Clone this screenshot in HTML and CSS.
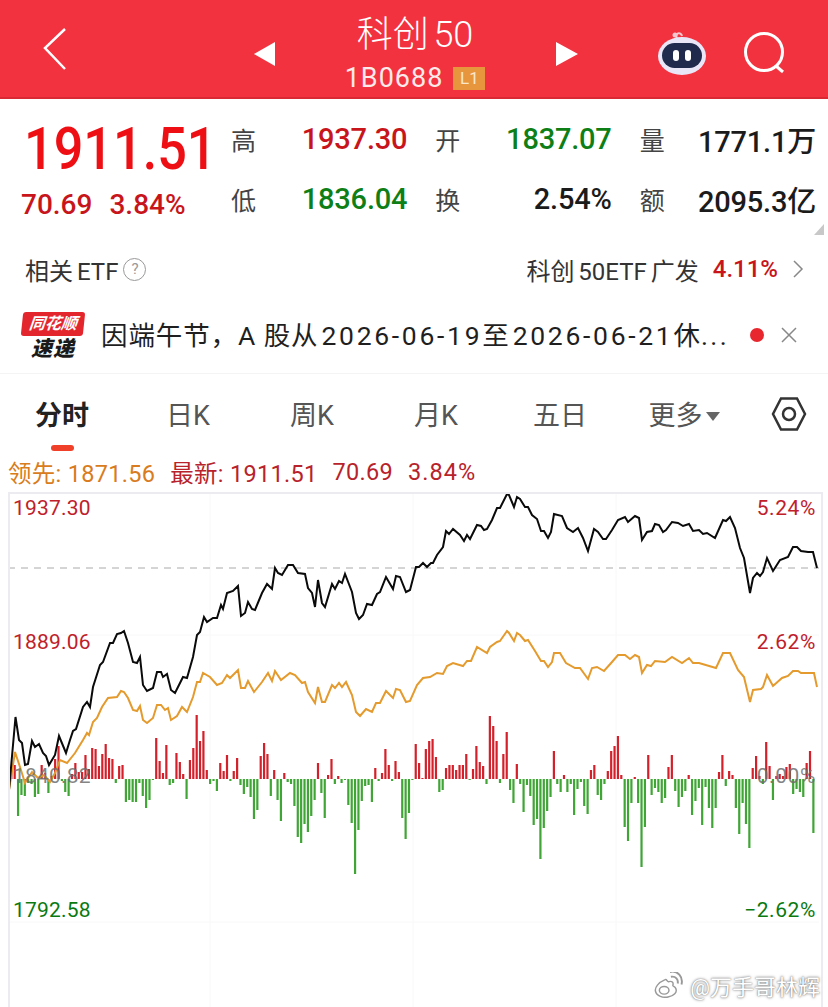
FILE: index.html
```html
<!DOCTYPE html>
<html lang="zh-CN">

<head>
  <meta charset="UTF-8">
  <meta name="viewport" content="width=device-width, initial-scale=1.0">
  <title>科创 50</title>
  <link rel="stylesheet" href="styles.css">
</head>

<body>
  <header class="topbar">
    <svg class="back" width="32" height="52" viewBox="0 0 32 52">
      <polyline points="26,6 6,25 26,46" />
    </svg>
    <div class="title-wrap">
      <svg class="tri" width="24" height="26" viewBox="0 0 24 26">
        <polygon points="22,1 22,25 1,13" />
      </svg>
      <div class="title">
        <div class="name">科创 50</div>
        <div class="code">1B0688<span class="level">L1</span></div>
      </div>
      <svg class="tri" width="24" height="26" viewBox="0 0 24 26">
        <polygon points="1,1 1,25 23,13" />
      </svg>
    </div>
    <div class="top-icons">
      <svg width="52" height="46" viewBox="0 0 52 46">
        <path class="robot-ant" d="M20 8 C17 2 24 0 25 5" />
        <circle cx="18" cy="4" r="2.5" fill="#f3c9cf" />
        <ellipse cx="25" cy="25" rx="24" ry="19" fill="#e9e6f7" />
        <rect x="5" y="12" width="40" height="25" rx="12.5" fill="#1f2a4d" />
        <rect x="16" y="19" width="6" height="11" rx="3" fill="#fff" />
        <rect x="28" y="19" width="6" height="11" rx="3" fill="#fff" />
      </svg>
      <svg class="search" width="46" height="46" viewBox="0 0 46 46">
        <circle cx="21" cy="21" r="18.5" />
        <line x1="33" y1="35" x2="40" y2="41" />
      </svg>
    </div>
  </header>

  <section class="quote">
    <div class="price-box">
      <div class="price">1911.51</div>
      <div class="change"><span>70.69</span><span>3.84%</span></div>
    </div>
    <div class="stats">
      <span class="lb">高</span><span class="val up">1937.30</span>
      <span class="lb">开</span><span class="val down">1837.07</span>
      <span class="lb">量</span><span class="val">1771.1万</span>
      <span class="lb">低</span><span class="val down">1836.04</span>
      <span class="lb">换</span><span class="val">2.54%</span>
      <span class="lb">额</span><span class="val">2095.3亿</span>
    </div>
    <i class="corner"></i>
  </section>

  <section class="etf">
    <div class="etf-left">相关 ETF<span class="help">?</span></div>
    <div class="etf-right">
      <span>科创 50ETF 广发</span>
      <span class="etf-pct">4.11%</span>
      <svg width="12" height="20" viewBox="0 0 12 20">
        <polyline points="2,2 10,10 2,18" />
      </svg>
    </div>
  </section>

  <section class="news">
    <div class="logo">
      <div class="logo-top">同花顺</div>
      <div class="logo-bottom">速递</div>
    </div>
    <div class="news-text">因端午节，A 股从<span class="date">2026-06-19</span>至<span class="date">2026-06-21</span>休<span class="more">...</span></div>
    <i class="dot"></i>
    <svg class="close" width="16" height="16" viewBox="0 0 16 16">
      <path d="M1 1 L15 15 M15 1 L1 15" />
    </svg>
  </section>

  <nav class="tabs">
    <div class="tab active">分时</div>
    <div class="tab">日K</div>
    <div class="tab">周K</div>
    <div class="tab">月K</div>
    <div class="tab">五日</div>
    <div class="tab">更多<span class="caret"></span></div>
    <svg class="hex" width="36" height="36" viewBox="0 0 36 36">
      <polygon points="10,2.5 26,2.5 34,18 26,33.5 10,33.5 2,18" />
      <circle cx="18" cy="18" r="6" />
    </svg>
  </nav>

  <div class="legend">
    <span class="lead">领先: 1871.56</span>
    <span class="latest">最新: 1911.51</span>
    <span class="latest">70.69</span>
    <span class="latest">3.84%</span>
  </div>

  <section class="chart">
    <svg class="plot" width="828" height="515" viewBox="0 492 828 515">
      <g class="grid">
        <line x1="8" y1="635" x2="819" y2="635" />
        <line x1="8" y1="922" x2="819" y2="922" />
        <line x1="210" y1="492" x2="210" y2="1007" />
        <line x1="413" y1="492" x2="413" y2="1007" />
        <line x1="616" y1="492" x2="616" y2="1007" />
      </g>
      <line class="prev" x1="8" y1="568" x2="819" y2="568" />
      <path id="barsUp" class="bars-up" />
      <path id="barsDown" class="bars-down" />
      <polyline class="avg" points="9,790 15,752 20,767 25,783 32,772 38,778 44,775 50,782 55,773 60,760 67,763 75,753 83,740 87,733 89,735 93,722 97,718 102,707 108,698 117,697 121,691 124,692 128,698 133,710 137,711 140,706 143,720 147,723 153,718 157,705 161,705 165,710 168,708 171,720 177,716 182,707 187,712 193,697 197,682 200,682 203,673 210,677 217,685 222,683 227,675 230,678 238,670 241,688 245,688 248,681 254,692 262,682 268,673 272,681 275,671 281,680 290,673 295,675 302,683 305,682 308,692 315,703 318,687 322,702 325,702 332,685 335,688 339,683 342,687 346,682 352,695 356,712 360,716 366,709 372,712 376,703 380,703 386,691 393,698 396,689 400,690 406,702 410,701 417,685 423,678 430,677 437,673 443,674 447,666 453,663 463,666 467,661 471,661 477,647 487,653 490,647 497,642 500,641 507,631 509,633 514,641 517,633 520,635 525,641 528,640 535,651 541,661 544,661 548,667 552,662 554,653 560,653 566,663 575,668 580,668 588,679 592,668 597,667 604,671 612,662 618,655 625,655 630,659 635,655 639,657 642,673 647,665 651,666 655,661 665,662 672,657 682,663 689,658 693,663 699,663 716,668 723,653 730,653 738,670 744,677 750,702 753,690 761,689 763,687 767,675 773,686 782,678 788,676 793,671 798,671 801,673 814,673 817,687" />
      <polyline class="price-line" points="9,790 15.5,717 19,740 22,743 25,765 28,764 32,741 35,747 39,744 43,753 46,756 49,765 55,755 59,736 66,753 70,740 73,731 76,729 83,707 87,702 90,707 93,687 100,665 103,662 110,643 113,643 117,634 121,633 124,631 128,643 133,662 137,663 140,657 143,685 147,691 153,688 157,672 161,672 163,677 167,674 171,690 175,693 178,687 183,677 187,678 193,657 197,635 200,632 204,617 207,622 213,618 217,618 221,605 223,609 227,593 233,591 238,586 241,616 245,613 248,602 252,609 255,610 262,593 267,584 272,589 275,568 278,573 282,575 288,565 293,565 298,573 305,574 308,588 312,593 315,607 318,580 322,603 325,607 332,584 335,589 339,581 342,583 345,574 352,592 356,613 359,619 363,615 367,604 372,605 377,594 380,592 386,577 393,589 396,576 400,577 406,592 410,590 416,567 419,567 423,563 427,567 431,563 433,563 437,555 443,547 446,531 449,534 453,529 460,535 464,541 467,535 470,539 477,525 481,526 484,530 487,529 492,520 497,508 500,508 507,494 509,495 514,507 517,497 520,499 525,507 528,507 532,515 537,519 541,531 544,531 548,538 551,532 554,514 562,516 567,528 573,532 578,528 583,538 588,551 594,529 598,532 603,539 606,539 612,530 618,520 625,517 628,522 635,516 639,518 642,540 647,532 652,531 655,524 659,525 663,532 666,530 672,522 678,523 683,526 689,524 693,531 699,530 703,534 707,533 715,538 723,520 726,521 730,517 735,528 740,548 744,558 750,593 753,578 757,573 760,576 763,572 767,558 773,571 780,560 788,557 793,547 797,547 801,551 808,552 813,552 817,568" />
    </svg>
    <span class="axis l up-t a1">1937.30</span>
    <span class="axis r up-t a1">5.24%</span>
    <span class="axis l up-t a2">1889.06</span>
    <span class="axis r up-t a2">2.62%</span>
    <span class="axis l flat-t a3">1840.82</span>
    <span class="axis r flat-t a3">0.00%</span>
    <span class="axis l down-t a4">1792.58</span>
    <span class="axis r down-t a4">−2.62%</span>
    <div class="mark">
      <svg width="31" height="26" viewBox="0 2 31 27">
        <path class="mark-blob" d="M12 10 C5 13 1 18 2 22 C3 27 10 29 15 28 C21 27 25 23 23 19 C22 17 20 17 20 16 C21 13 19 11 16 12 C14 13 14 9 12 10 Z" />
        <ellipse class="mark-eye" cx="11" cy="21" rx="5" ry="4" />
        <path class="mark-arc" d="M18 7 C23 6 26 10 25 14 M17 2 C25 0 31 7 29 15" />
      </svg>
      <span>@万手哥林辉</span>
    </div>
  </section>

  <script src="chart.js"></script>
</body>

</html>
```

FILE: styles.css
```css
* {
  box-sizing: border-box;
}

html,
body {
  margin: 0;
  height: 1007px;
  overflow: hidden;
  background: #fff;
}

body {
  font-family: Roboto, "Noto Sans CJK SC", sans-serif;
  color: #222;
}

.topbar {
  height: 99px;
  display: flex;
  align-items: center;
  padding-left: 39px;
  background: #f3323f;
  border-bottom: 2px solid #d92935;
  color: #fff;
}

.back polyline {
  fill: none;
  stroke: #fff;
  stroke-width: 2.5;
}

.title-wrap {
  display: flex;
  align-items: center;
  align-self: stretch;
  margin-left: 182px;
  width: 326px;
  justify-content: space-between;
}

.tri {
  fill: #fff;
  margin-top: 11px;
}

.title {
  text-align: center;
  padding-top: 12px;
  margin-left: -2px;
  align-self: flex-start;
}

.name {
  font-size: 36px;
  font-weight: 300;
  line-height: 46px;
  word-spacing: -4px;
}

.code {
  margin-top: 4px;
  font-size: 27px;
  line-height: 32px;
  color: #fdeaea;
  letter-spacing: 1px;
  display: flex;
  align-items: center;
  justify-content: center;
  font-weight: 400;
}

.level {
  width: 32px;
  height: 23px;
  margin-left: 10px;
  background: #e8963e;
  color: #fbe6cc;
  font-size: 17px;
  letter-spacing: 0;
  line-height: 23px;
  text-align: center;
}

.top-icons {
  display: flex;
  align-items: center;
  gap: 35px;
  margin-left: 78px;
  margin-top: 10px;
}

.robot-ant {
  fill: none;
  stroke: #f3c9cf;
  stroke-width: 2;
}

.search circle,
.search line {
  fill: none;
  stroke: #fff;
  stroke-width: 3;
}

.search {
  margin-left: -1px;
}

.quote {
  position: relative;
  height: 141px;
  display: flex;
  padding: 10px 12px 0 0;
}

.price-box {
  width: 231px;
  flex: none;
}

.price {
  margin: 6px 0 0 24px;
  font-size: 60px;
  line-height: 68px;
  font-weight: 500;
  color: #ee0f14;
  transform: scaleX(0.87);
  transform-origin: left center;
}

.change {
  display: flex;
  gap: 17px;
  margin: 6px 0 0 21px;
  font-size: 28px;
  line-height: 32px;
  font-weight: 500;
  color: #c8151b;
}

.stats {
  flex: 1;
  display: grid;
  grid-template-columns: 26px 1fr 26px 1fr 26px 1fr;
  grid-template-rows: 60px 60px;
  column-gap: 28px;
  align-items: center;
}

.lb {
  font-size: 25px;
  color: #444;
}

.val {
  text-align: right;
  font-size: 29px;
  font-weight: 500;
  letter-spacing: -0.2px;
  color: #1b1b1b;
  white-space: nowrap;
}

.up {
  color: #c8151b;
}

.down {
  color: #0d7f16;
}

.corner {
  position: absolute;
  right: 4px;
  bottom: 5px;
  width: 0;
  height: 0;
  border-left: 10px solid transparent;
  border-bottom: 11px solid #c8c8c8;
}

.etf {
  height: 62px;
  display: flex;
  justify-content: space-between;
  align-items: center;
  padding: 0 24px 4px 25px;
  font-size: 24px;
  word-spacing: -2px;
}

.etf-left {
  display: flex;
  align-items: center;
  color: #333;
}

.help {
  width: 23px;
  height: 23px;
  margin-left: 5px;
  border: 1px solid #999;
  border-radius: 50%;
  color: #999;
  font-size: 15px;
  line-height: 21px;
  text-align: center;
}

.etf-right {
  display: flex;
  align-items: center;
  color: #333;
}

.etf-pct {
  margin: 0 14px;
  color: #c8151b;
  font-weight: 500;
}

.etf-right polyline {
  fill: none;
  stroke: #888;
  stroke-width: 1.5;
}

.news {
  height: 72px;
  display: flex;
  align-items: center;
  padding-left: 22px;
  border-bottom: 1px solid #f4f4f4;
}

.logo {
  width: 62px;
  flex: none;
  text-align: center;
}

.logo-top {
  height: 24px;
  background: #e3262e;
  border-radius: 3px;
  color: #fff;
  font-size: 16px;
  font-weight: 700;
  font-style: italic;
  line-height: 23px;
  transform: skewX(-6deg);
}

.logo-bottom {
  font-size: 21px;
  font-weight: 900;
  font-style: italic;
  line-height: 27px;
  letter-spacing: 1px;
  color: #1a1a1a;
}

.news-text {
  margin: -9px 0 0 17px;
  width: 649px;
  flex: none;
  font-size: 26.5px;
  letter-spacing: 0.9px;
  color: #1f1f1f;
  white-space: nowrap;
}

.date {
  margin: 0 0 0 3px;
  letter-spacing: 2.7px;
}

.more {
  letter-spacing: 2.5px;
}

.dot {
  width: 14px;
  height: 14px;
  margin-top: -5px;
  border-radius: 50%;
  background: #e8262d;
  flex: none;
}

.close {
  margin: -5px 0 0 17px;
}

.close path {
  stroke: #888;
  stroke-width: 1.5;
}

.tabs {
  position: relative;
  height: 82px;
  display: grid;
  grid-template-columns: 126px 124px 124px 124px 124px 124px 1fr;
  align-items: center;
}

.tab {
  text-align: center;
  font-size: 27px;
  color: #555;
  margin-top: -4px;
}

.tabs .tab:first-child {
  text-align: left;
  padding-left: 35px;
}

.tab.active {
  font-weight: 700;
  color: #222;
}

.tab.active::after {
  content: "";
  position: absolute;
  left: 51px;
  bottom: 5px;
  width: 23px;
  height: 6px;
  border-radius: 3px;
  background: #f0402a;
}

.caret {
  display: inline-block;
  width: 0;
  height: 0;
  margin-left: 3px;
  vertical-align: 4px;
  border-left: 7px solid transparent;
  border-right: 7px solid transparent;
  border-top: 9px solid #666;
}

.hex {
  justify-self: start;
  margin-left: 25px;
  margin-top: -2px;
}

.hex polygon,
.hex circle {
  fill: none;
  stroke: #333;
  stroke-width: 2.5;
}

.legend {
  height: 36px;
  display: flex;
  gap: 15px;
  padding: 0 0 4px 8px;
  align-items: center;
  font-size: 23.5px;
  letter-spacing: 0.3px;
}

.legend span:last-child {
  letter-spacing: 1px;
}

.lead {
  color: #d97c20;
}

.latest {
  color: #b8232b;
}

.chart {
  position: relative;
  height: 515px;
}

.plot {
  display: block;
}

.grid line {
  stroke: #f8f8f9;
  stroke-width: 1;
}

.prev {
  stroke: #aaa;
  stroke-width: 1;
  stroke-dasharray: 7 6;
}

.bars-up {
  stroke: #d3202a;
  stroke-width: 2.2;
  fill: none;
}

.bars-down {
  stroke: #3fa535;
  stroke-width: 2.2;
  fill: none;
}

.avg {
  fill: none;
  stroke: #e49a2c;
  stroke-width: 2;
}

.price-line {
  fill: none;
  stroke: #0a0a0a;
  stroke-width: 2;
}

/* frame of the chart, drawn over the plot */
.chart::before {
  content: "";
  position: absolute;
  left: 8px;
  top: 0;
  width: 811px;
  height: 515px;
  border: 2px solid #ececf0;
  border-bottom: 0;
  pointer-events: none;
}

.axis {
  position: absolute;
  font-size: 21px;
  line-height: 24px;
  letter-spacing: 0.2px;
}

.axis.l {
  left: 13px;
}

.axis.r {
  right: 12px;
  letter-spacing: 0.6px;
}

.a1 {
  top: 4px;
}

.a2 {
  top: 138px;
}

.a3 {
  top: 272px;
}

.a4 {
  top: 406px;
}

.up-t {
  color: #c0202a;
}

.flat-t {
  color: rgba(110, 110, 110, 0.85);
}

.down-t {
  color: #0a7a10;
}

.mark {
  position: absolute;
  right: 8px;
  bottom: 6px;
  display: flex;
  align-items: center;
  gap: 6px;
  font-size: 22px;
  color: #fff;
  text-shadow: 0 0 3px #777, 0 0 1px #777;
}

.mark-blob,
.mark-eye {
  fill: #fff;
  stroke: #999;
  stroke-width: 1.5;
}

.mark-arc {
  fill: none;
  stroke: #999;
  stroke-width: 2;
}
```

FILE: chart.js
```js
// 每分鐘一根量柱，正的往上畫紅色，負的往下畫綠色
const bars = [
  9, 14, -37, -16, -17, -4, -5, -18, -15, 14,
  6, -14, 3, 20, 33, -2, -13, -17, 5, 16,
  7, 7, 24, 10, 31, 30, 13, 25, 35, 21,
  20, -4, 13, 14, -23, -21, -23, -23, -4, -17,
  -29, -21, -1, 41, 18, 6, 34, -6, -4, 26,
  17, 5, -20, 19, 31, 64, 38, 48, 9, -5,
  -2, -12, 16, 8, 24, -2, 8, 21, -6, -15,
  -8, -18, -40, -31, 23, 36, 25, -17, 9, -21,
  -42, 6, -3, -5, -27, -58, -64, -45, -53, -37,
  -21, 16, -14, -39, 4, 20, -5, 3, -4, -1,
  -26, -44, -95, -51, -22, -7, -6, -23, 11, -2,
  6, 30, 14, -2, 18, 7, -39, -60, -34, -1,
  35, 16, 1, 30, 38, 40, 22, -13, -11, 11,
  14, 14, 9, 14, 14, 25, -1, 10, 33, 17,
  13, -5, 63, 53, 38, -4, 25, 47, -11, -24,
  15, -5, -33, -6, -17, -46, -40, -80, -49, -32,
  -18, 28, -5, -13, 4, -13, -5, -36, -10, -3,
  -27, -35, 9, 14, -16, -21, -5, 8, 28, 33,
  43, 4, -48, -62, -24, 2, -24, -88, -48, 24,
  -16, -9, -13, -24, -19, 12, 24, -12, -28, -18,
  -12, 4, -36, -22, -9, -46, -8, -29, -49, -29,
  7, 24, -7, 8, 4, -29, -55, -24, -45, -69,
  11, 23, 3, -5, 37, 13, -21, 3, 5, 3,
  12, 15, -15, -10, -13, -18, 16, 28, -54, 0
]

const baseY = 779
let up = ''
let down = ''

bars.forEach((h, i) => {
  const x = (11.33 + i * 3.37).toFixed(2)
  const seg = `M${x} ${baseY}V${baseY - h}`
  if (h > 0) up += seg
  else down += seg
})

document.getElementById('barsUp').setAttribute('d', up)
document.getElementById('barsDown').setAttribute('d', down)
```
